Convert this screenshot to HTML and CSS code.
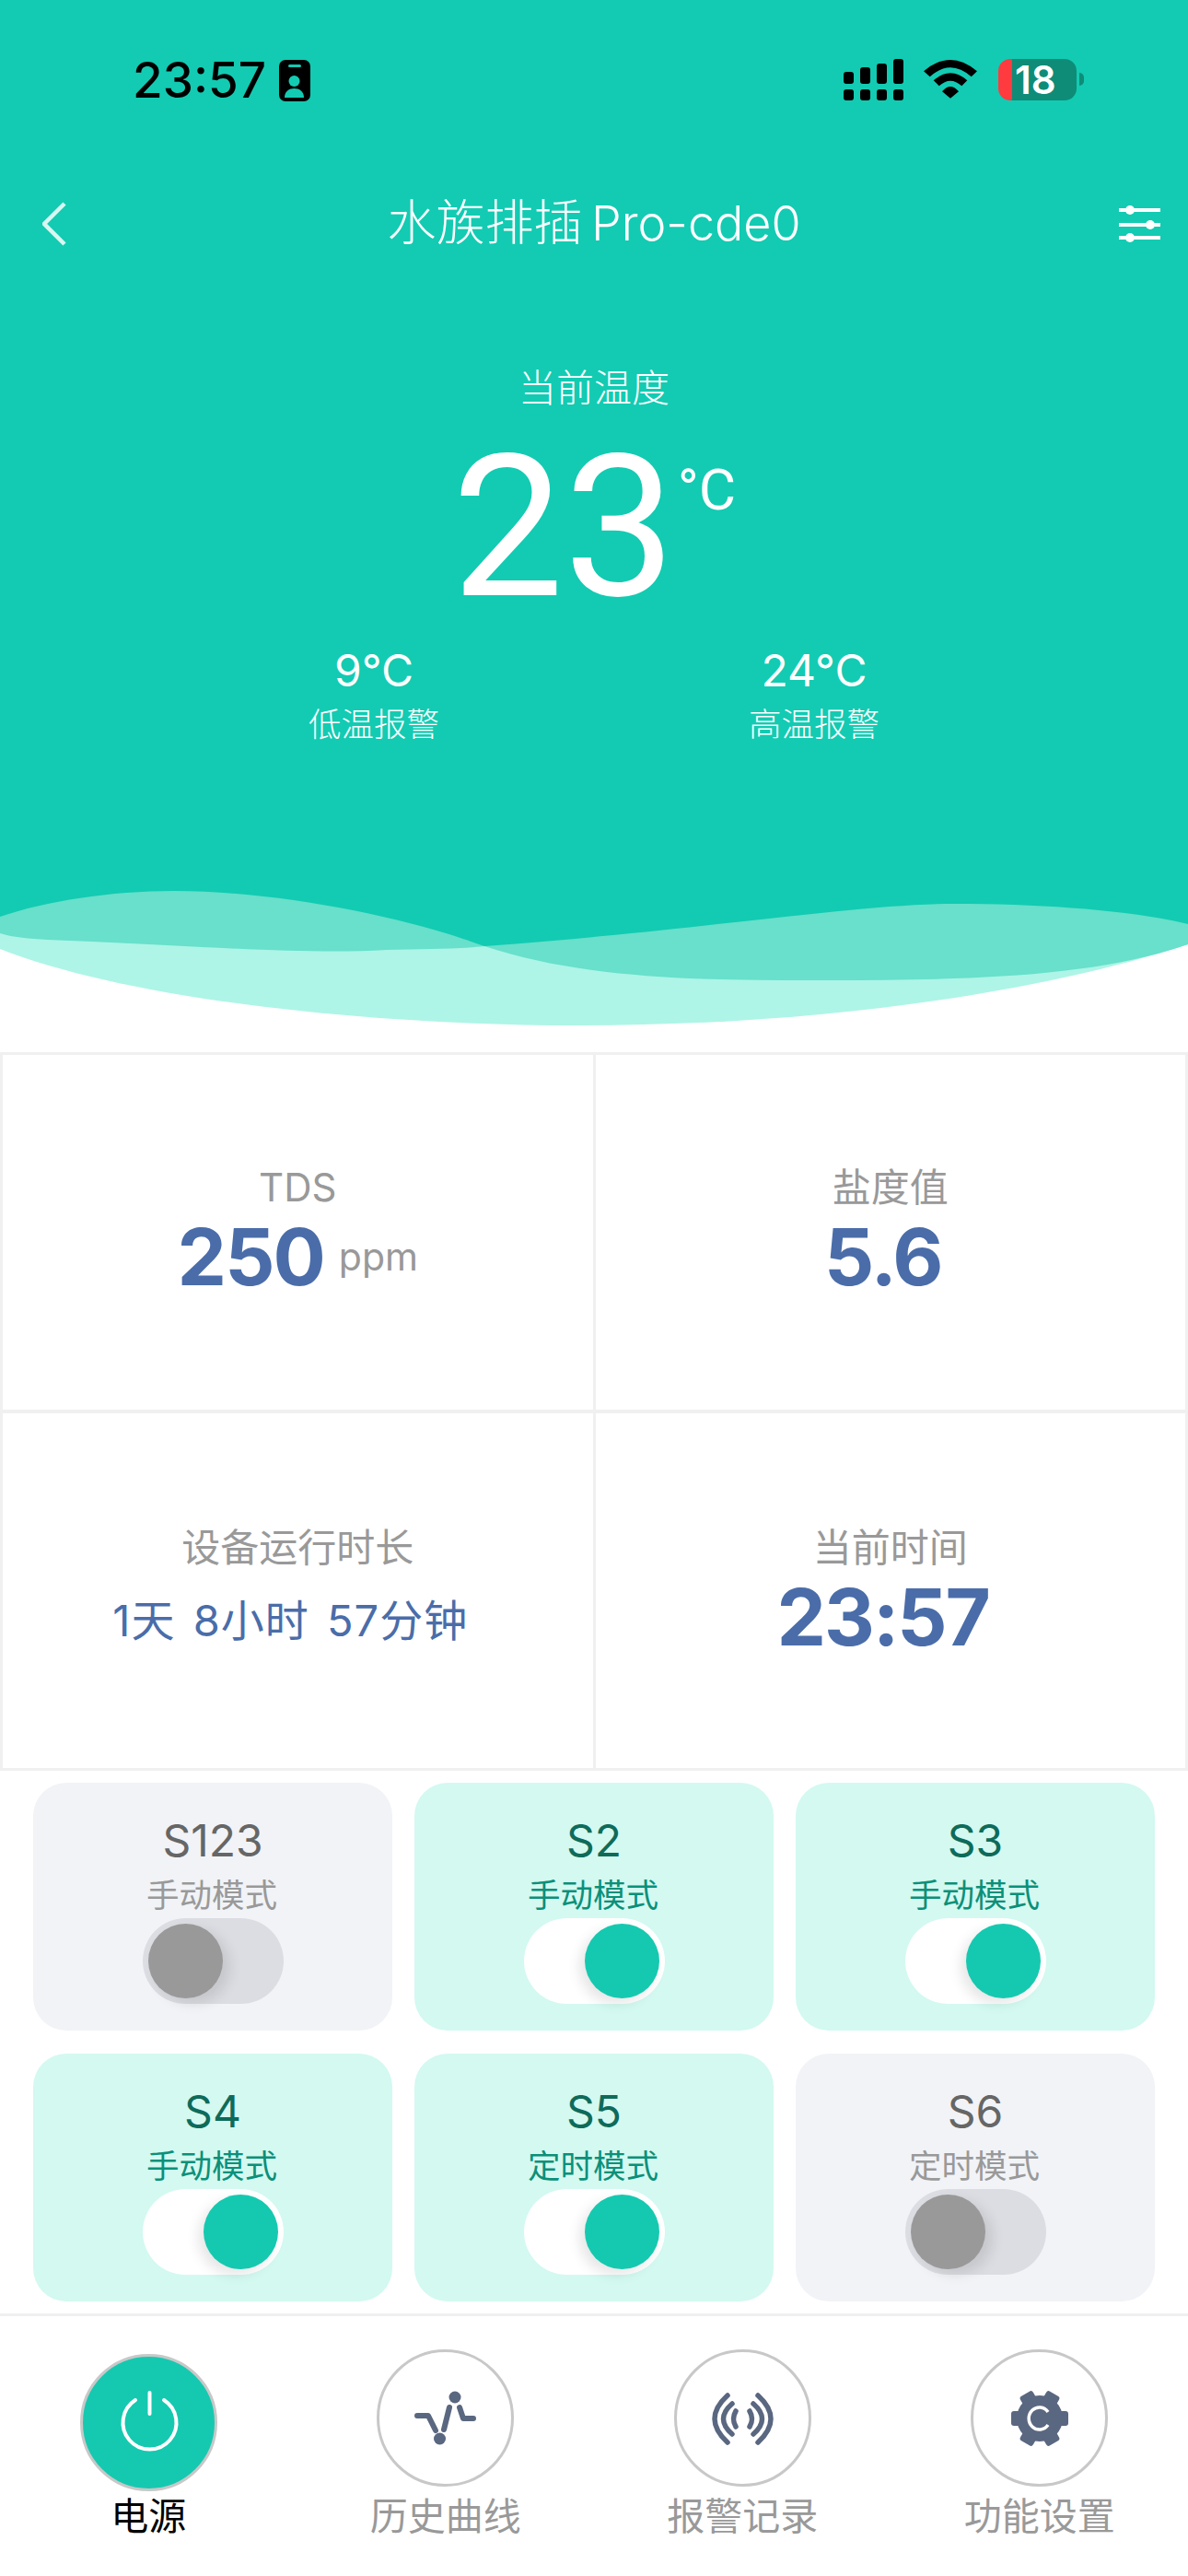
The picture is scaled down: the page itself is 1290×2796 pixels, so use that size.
FILE: index.html
```html
<!DOCTYPE html>
<html lang="zh-CN">
<head>
    <meta charset="UTF-8">
    <meta name="viewport" content="width=device-width, initial-scale=1.0">
    <title>水族排插 Pro-cde0</title>
    <link rel="stylesheet" href="styles.css">
</head>
<body>
    <section class="hero">
        <div class="statusbar">
            <div class="status-left">
                <span class="clock">23:57</span>
                <svg class="badge" width="34" height="45" viewBox="0 0 34 45">
                    <rect width="34" height="45" rx="7" fill="#000"/>
                    <rect x="10" y="5" width="14" height="3" rx="1.5" fill="#12cbb2"/>
                    <circle cx="16.500" cy="23" r="6" fill="#12cbb2"/>
                    <path d="M6 41c0-7 5-10 10.500-10s10.500 3 10.500 10z" fill="#12cbb2"/>
                </svg>
            </div>
            <div class="status-right">
                <svg class="signal" width="65" height="45" viewBox="0 0 65 45">
                    <rect x="0" y="14" width="11" height="13" rx="3"/>
                    <rect x="18" y="9" width="11" height="18" rx="3"/>
                    <rect x="36" y="5" width="11" height="22" rx="3"/>
                    <rect x="54" y="0" width="11" height="27" rx="3"/>
                    <rect x="0" y="33" width="11" height="12" rx="3"/>
                    <rect x="18" y="33" width="11" height="12" rx="3"/>
                    <rect x="36" y="33" width="11" height="12" rx="3"/>
                    <rect x="54" y="33" width="11" height="12" rx="3"/>
                </svg>
                <svg class="wifi" width="58" height="42" viewBox="0 0 58 42">
                    <path d="M0 12.300Q29-12.300 58 12.300L51.700 18.300Q29-1.700 6.700 18.300z"/>
                    <path d="M10.700 22.300Q29 6.300 47.300 22.300L41.300 28.300Q29 17.100 16.700 28.300z"/>
                    <path d="M29 41.700L20 34.300Q29 23.700 38 34.300z"/>
                </svg>
                <div class="battery">18</div>
                <div class="battery-nub"></div>
            </div>
        </div>

        <div class="navbar">
            <svg class="back" width="30" height="60" viewBox="0 0 30 60">
                <polyline points="24,8 2,30 24,52" fill="none" stroke="#d8f7f1" stroke-width="4.500"/>
            </svg>
            <div class="title"><span class="title-name">水族排插</span> Pro-cde0</div>
            <svg class="tune" width="45" height="40" viewBox="0 0 45 40" fill="#fff">
                <rect x="0" y="3" width="45" height="4"/>
                <rect x="0" y="19" width="45" height="4"/>
                <rect x="0" y="33" width="45" height="4"/>
                <circle cx="12" cy="5" r="5"/>
                <circle cx="34" cy="21" r="5"/>
                <circle cx="12" cy="35" r="5"/>
            </svg>
        </div>

        <div class="temp-label">当前温度</div>
        <div class="temp-now">
            <span class="temp-value">23</span>
            <span class="temp-unit">°C</span>
        </div>
        <div class="alarms">
            <div class="alarm">
                <div class="alarm-value">9°C</div>
                <div class="alarm-name">低温报警</div>
            </div>
            <div class="alarm">
                <div class="alarm-value">24°C</div>
                <div class="alarm-name">高温报警</div>
            </div>
        </div>
    </section>

    <svg class="waves" width="1290" height="182" viewBox="0 0 1290 182">
        <path fill="#aef5e7" d="M0 0H1290V65C1120 120 880 153 630 153C400 153 140 125 0 70z"/>
        <path fill="#68e0cb" d="M0 0H1290V65C1190 100 1060 104 900 104C780 104 640 105 526 67C500 70 460 70 420 71C340 76 230 68 100 62C60 60 20 60 0 53z"/>
        <path fill="#12cbb2" d="M0 0H1290V43C1230 28 1130 21 1037 21C930 21 760 50 526 67C440 35 300 7 189 7C120 7 50 18 0 35z"/>
    </svg>

    <section class="readings">
        <div class="cell">
            <div class="cell-label">TDS</div>
            <div class="cell-value"><span class="num">250</span><span class="unit">ppm</span></div>
        </div>
        <div class="cell">
            <div class="cell-label">盐度值</div>
            <div class="cell-value"><span class="num">5.6</span><span class="unit"></span></div>
        </div>
        <div class="cell lower">
            <div class="cell-label">设备运行时长</div>
            <div class="cell-value"><span class="duration">1天 8小时 57分钟</span><span class="unit"></span></div>
        </div>
        <div class="cell lower">
            <div class="cell-label">当前时间</div>
            <div class="cell-value"><span class="num">23:57</span><span class="unit"></span></div>
        </div>
    </section>

    <section class="sockets">
        <div class="socket">
            <div class="socket-name">S123</div>
            <div class="socket-mode">手动模式</div>
            <div class="toggle"><span class="knob"></span></div>
        </div>
        <div class="socket on">
            <div class="socket-name">S2</div>
            <div class="socket-mode">手动模式</div>
            <div class="toggle"><span class="knob"></span></div>
        </div>
        <div class="socket on">
            <div class="socket-name">S3</div>
            <div class="socket-mode">手动模式</div>
            <div class="toggle"><span class="knob"></span></div>
        </div>
        <div class="socket on">
            <div class="socket-name">S4</div>
            <div class="socket-mode">手动模式</div>
            <div class="toggle"><span class="knob"></span></div>
        </div>
        <div class="socket on">
            <div class="socket-name">S5</div>
            <div class="socket-mode">定时模式</div>
            <div class="toggle"><span class="knob"></span></div>
        </div>
        <div class="socket">
            <div class="socket-name">S6</div>
            <div class="socket-mode">定时模式</div>
            <div class="toggle"><span class="knob"></span></div>
        </div>
    </section>

    <nav class="tabs">
        <div class="tab active">
            <div class="tab-icon">
                <svg width="80" height="80" viewBox="0 0 80 80" fill="none" stroke="#fff" stroke-width="4" stroke-linecap="round">
                    <path d="M41.500 7V30"/>
                    <path d="M26 15A29 29 0 1 0 57 15"/>
                </svg>
            </div>
            <div class="tab-name">电源</div>
        </div>
        <div class="tab">
            <div class="tab-icon">
                <svg width="80" height="80" viewBox="0 0 80 80" fill="none" stroke="#5a6780" stroke-width="6" stroke-linecap="round" stroke-linejoin="round">
                    <path d="M9 37H21L29 53"/>
                    <path d="M44 28L38 52"/>
                    <path d="M55 28L59 40H70"/>
                    <circle cx="33.500" cy="62" r="6.500" fill="#5a6780" stroke="none"/>
                    <circle cx="50" cy="17" r="6.500" fill="#5a6780" stroke="none"/>
                </svg>
            </div>
            <div class="tab-name">历史曲线</div>
        </div>
        <div class="tab">
            <div class="tab-icon">
                <svg width="80" height="80" viewBox="0 0 80 80" fill="none" stroke="#5a6780" stroke-width="5.500" stroke-linecap="round">
                    <path d="M33 32Q28 40.500 33 49"/>
                    <path d="M29 24Q10 40.500 29 57"/>
                    <path d="M24 15Q-4 40.500 24 66"/>
                    <path d="M48 32Q53 40.500 48 49"/>
                    <path d="M52 24Q71 40.500 52 57"/>
                    <path d="M57 15Q85 40.500 57 66"/>
                </svg>
            </div>
            <div class="tab-name">报警记录</div>
        </div>
        <div class="tab">
            <div class="tab-icon">
                <svg width="80" height="80" viewBox="0 0 80 80" fill="#5a6780">
                    <circle cx="40" cy="40" r="25"/>
                    <rect x="9" y="32" width="62" height="16" rx="3"/>
                    <rect x="9" y="32" width="62" height="16" rx="3" transform="rotate(60 40 40)"/>
                    <rect x="9" y="32" width="62" height="16" rx="3" transform="rotate(120 40 40)"/>
                    <path d="M49 33A11.500 12 0 1 0 49 47" fill="none" stroke="#fff" stroke-width="3.500"/>
                </svg>
            </div>
            <div class="tab-name">功能设置</div>
        </div>
    </nav>
</body>
</html>
```

FILE: styles.css
```css
* {
    box-sizing: border-box;
}

body {
    width: 1290px;
    height: 2796px;
    margin: 0;
    overflow: hidden;
    background-color: #fff;
    font-family: Inter, "Noto Sans CJK SC", sans-serif;
}

svg {
    display: block;
}

/* top green part */
.hero {
    height: 960px;
    padding-top: 64px;
    background-color: #12cbb2;
    color: #fff;
}

.statusbar {
    display: flex;
    justify-content: space-between;
    height: 47px;
    padding: 0 113px 0 144px;
}

.status-left {
    display: flex;
    align-items: center;
    gap: 14px;
}

.clock {
    color: #000;
    font-size: 53px;
    line-height: 47px;
    font-weight: 500;
}

.status-right {
    display: flex;
    align-items: flex-start;
}

.wifi {
    margin: 1px 23px 0 22px;
}

.battery {
    width: 85px;
    height: 45px;
    padding-left: 18px;
    border-radius: 13px;
    background: linear-gradient(90deg, #ff3b3f 15px, #0e8c78 15px);
    font-size: 42px;
    line-height: 45px;
    font-weight: 600;
}

.battery-nub {
    width: 5px;
    height: 14px;
    margin: 15px 0 0 3px;
    border-radius: 0 7px 7px 0;
    background-color: #0e8c78;
}

.navbar {
    display: grid;
    grid-template-columns: 1fr auto 1fr;
    align-items: center;
    height: 60px;
    margin-top: 101px;
    padding: 0 30px 0 46px;
}

.tune {
    justify-self: end;
}

.title {
    margin-left: -16px;
    font-size: 52px;
    line-height: 60px;
    font-weight: 300;
    word-spacing: -5px;
}

.title-name {
    font-size: 53px;
}

.temp-label {
    margin-top: 124px;
    text-align: center;
    font-size: 41px;
    line-height: 50px;
    font-weight: 300;
}

.temp-now {
    display: flex;
    justify-content: center;
    margin-top: 27px;
    height: 200px;
}

.temp-value {
    font-family: Roboto, sans-serif;
    font-size: 216px;
    line-height: 200px;
    font-weight: 450;
}

.temp-unit {
    margin-top: 29px;
    margin-left: 2px;
    font-family: Roboto, sans-serif;
    font-size: 62px;
    line-height: 60px;
}

.alarms {
    display: flex;
    justify-content: center;
    gap: 238px;
    margin-top: 26px;
}

.alarm {
    width: 240px;
    text-align: center;
}

.alarm-value {
    font-size: 48px;
    line-height: 58px;
}

.alarm-name {
    font-size: 35.500px;
    line-height: 60px;
    font-weight: 300;
}

/* readings table */
.readings {
    display: grid;
    grid-template-columns: 1fr 1fr;
    grid-auto-rows: 385px;
    gap: 4px 3px;
    padding: 3px;
    background-color: #f0f0f0;
}

.cell {
    display: flex;
    flex-direction: column;
    align-items: center;
    padding-top: 119px;
    background-color: #fff;
}

.cell.lower {
    padding-top: 121px;
}

.cell-label {
    color: #999;
    font-size: 42px;
    line-height: 50px;
}

.cell-value {
    display: flex;
    align-items: center;
    gap: 16px;
    height: 90px;
    margin-top: 5px;
}

.num {
    color: #4a6da9;
    font-size: 85px;
    font-weight: 700;
    letter-spacing: -2px;
}

.unit {
    color: #999;
    font-size: 41px;
}

.duration {
    color: #4a6da9;
    font-size: 47px;
    letter-spacing: 1px;
    word-spacing: 5px;
}

/* socket cards */
.sockets {
    display: grid;
    grid-template-columns: repeat(3, 390px);
    grid-auto-rows: 269px;
    gap: 25px 24px;
    padding: 13px 36px;
}

.socket {
    display: flex;
    flex-direction: column;
    align-items: center;
    padding-top: 27px;
    border-radius: 36px;
    background-color: #f1f3f7;
}

.socket-name {
    color: #666;
    font-size: 48px;
    line-height: 72px;
}

.socket-mode {
    padding-right: 2px;
    color: #999;
    font-size: 35.500px;
    line-height: 48px;
}

.toggle {
    display: flex;
    width: 153px;
    height: 93px;
    padding: 6px;
    border-radius: 47px;
    background-color: #dcdde2;
}

.knob {
    width: 81px;
    height: 81px;
    border-radius: 50%;
    background-color: #999;
    box-shadow: 8px 6px 14px rgba(0, 0, 0, 0.1);
}

.socket.on {
    background-color: #d3f9f1;
}

.socket.on .socket-name {
    color: #0e6b5a;
}

.socket.on .socket-mode {
    color: #0b9079;
}

.socket.on .toggle {
    justify-content: flex-end;
    background-color: #fff;
}

.socket.on .knob {
    background-color: #15c9b0;
    box-shadow: -6px 6px 14px rgba(0, 0, 0, 0.1);
}

/* bottom tabs */
.tabs {
    display: grid;
    grid-template-columns: repeat(4, 1fr);
    padding-top: 36px;
    border-top: 3px solid #f0f0f0;
}

.tab {
    display: flex;
    flex-direction: column;
    align-items: center;
}

.tab-icon {
    display: flex;
    align-items: center;
    justify-content: center;
    width: 149px;
    height: 149px;
    border: 3px solid #c8c8c8;
    border-radius: 50%;
}

.tab-name {
    margin-top: 7px;
    color: #999;
    font-size: 41px;
    line-height: 50px;
}

.tab.active .tab-icon {
    margin-top: 5px;
    background-color: #15c9b0;
}

.tab.active .tab-name {
    margin-top: 2px;
    color: #000;
}
```
